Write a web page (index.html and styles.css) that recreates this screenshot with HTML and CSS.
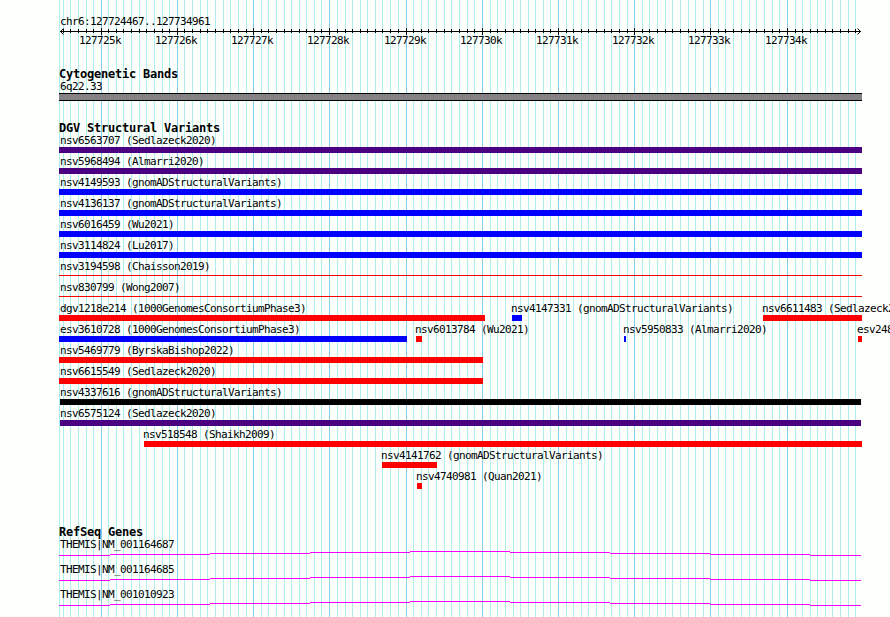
FILE: index.html
```
<!DOCTYPE html>
<html>
	<head>
		<meta charset="utf-8">
		<title>chr6:127724467..127734961</title>
		<link rel="stylesheet" href="styles.css">
	</head>
	<body>
		<div class="browser">
			<svg class="grid" width="890" height="617"></svg>
			<div class="region">chr6:127724467..127734961</div>
			<svg class="ruler" width="890" height="22"></svg>
			<div class="track cyto">
				<h2>Cytogenetic Bands</h2>
				<p>6q22.33</p>
				<div class="band"></div>
			</div>
			<div class="track variants">
				<h2>DGV Structural Variants</h2>
				<div class="rows"></div>
			</div>
			<div class="track genes">
				<h2>RefSeq Genes</h2>
				<div class="gene"><p>THEMIS|NM_001164687</p></div>
				<div class="gene"><p>THEMIS|NM_001164685</p></div>
				<div class="gene"><p>THEMIS|NM_001010923</p></div>
			</div>
		</div>
		<script src="tracks.js"></script>
	</body>
</html>
```
FILE: styles.css
```
* {
	margin: 0;
	padding: 0;
}

body {
	background: #fdfffc;
}

.browser {
	position: relative;
	width: 890px;
	height: 617px;
	overflow: hidden;
	font-family: "DejaVu Sans Mono", monospace;
	font-size: 11px;
	line-height: 13px;
	letter-spacing: -0.62px;
	color: #000;
	white-space: nowrap;
}

.grid {
	position: absolute;
	left: 0;
	top: 0;
	z-index: -1;
}

.grid .minor {
	fill: #afeeee;
}

.grid .major {
	fill: #87ceeb;
}

.region {
	padding: 15px 0 0 60px;
	height: 13px;
}

.ruler {
	display: block;
}

.track h2 {
	padding-left: 59px;
	height: 13px;
	font-size: 12px;
	line-height: 14px;
	letter-spacing: -0.22px;
}

.track p {
	padding-left: 60px;
}

.cyto {
	padding-top: 17px;
	height: 54px;
}

.band {
	width: 803px;
	height: 6px;
	margin-left: 59px;
	background: #858285;
	border-top: 1px solid #000;
	border-bottom: 1px solid #000;
}

/* 变异轨道 */
.variants {
	height: 404px;
}

.row {
	position: relative;
	height: 21px;
}

.row .name {
	position: absolute;
	top: 0;
}

.row .bar {
	position: absolute;
	top: 13px;
	height: 6px;
}

.row .thin {
	top: 15px;
	height: 1px;
}

.purple {
	background: #4b0082;
}

.blue {
	background: #0000ff;
}

.red {
	background: #ff0000;
}

.black {
	background: #000;
}

/* 基因轨道 */
.gene {
	height: 25px;
}

.gene svg {
	display: block;
	margin-top: -1px;
}
```
FILE: tracks.js
```
window.onload = function() {
	function my$(cls) {
		return document.getElementsByClassName(cls)[0];
	}

	// 每100bp一条网格线
	var ticks = [
		63, 70, 78, 86, 93, 101, 108, 116, 123, 131, 139, 146, 154, 162, 169, 177,
		184, 192, 200, 207, 215, 223, 230, 238, 246, 253, 261, 268, 276, 284, 291,
		299, 306, 314, 321, 329, 337, 345, 352, 360, 367, 375, 382, 390, 398, 406,
		413, 421, 428, 436, 444, 451, 459, 467, 474, 482, 490, 497, 505, 513, 520,
		528, 535, 543, 550, 558, 566, 573, 581, 588, 596, 604, 611, 619, 627, 634,
		642, 649, 657, 665, 672, 680, 688, 695, 703, 710, 718, 725, 733, 741, 749,
		756, 764, 772, 779, 787, 795, 802, 810, 817, 825, 832, 840, 848, 855
	];

	// 网格和标尺
	var grid = '<rect class="minor" x="59" y="0" width="1" height="617"/>';
	var ruler = '<rect x="60" y="3" width="801" height="1"/>' +
		'<path d="M63.5 0.5L60.5 3.5L63.5 6.5M857.5 0.5L860.5 3.5L857.5 6.5" fill="none" stroke="#000"/>';
	for (var i = 0; i < ticks.length; i++) {
		var x = ticks[i];
		var major = i % 10 == 5;
		grid += '<rect class="' + (major ? "major" : "minor") + '" x="' + x + '" y="0" width="1" height="617"/>';
		if (major) {
			ruler += '<rect x="' + x + '" y="0" width="1" height="7"/>';
			ruler += '<text x="' + (x - 22) + '" y="16">' + (127725 + (i - 5) / 10) + 'k</text>';
		} else {
			ruler += '<rect x="' + x + '" y="1" width="1" height="4"/>';
		}
	}
	my$("grid").innerHTML = grid;
	my$("ruler").innerHTML = ruler;

	// [名称, 文字x, 起点, 终点, 颜色]
	var rows = [
		[["nsv6563707 (Sedlazeck2020)", 60, 59, 862, "purple"]],
		[["nsv5968494 (Almarri2020)", 60, 59, 862, "purple"]],
		[["nsv4149593 (gnomADStructuralVariants)", 60, 59, 862, "blue"]],
		[["nsv4136137 (gnomADStructuralVariants)", 60, 59, 862, "blue"]],
		[["nsv6016459 (Wu2021)", 60, 59, 862, "blue"]],
		[["nsv3114824 (Lu2017)", 60, 59, 862, "blue"]],
		[["nsv3194598 (Chaisson2019)", 60, 59, 862, "red thin"]],
		[["nsv830799 (Wong2007)", 60, 59, 862, "red thin"]],
		[
			["dgv1218e214 (1000GenomesConsortiumPhase3)", 60, 59, 485, "red"],
			["nsv4147331 (gnomADStructuralVariants)", 511, 512, 522, "blue"],
			["nsv6611483 (Sedlazeck2020)", 762, 763, 862, "red"]
		],
		[
			["esv3610728 (1000GenomesConsortiumPhase3)", 60, 59, 407, "blue"],
			["nsv6013784 (Wu2021)", 415, 416, 422, "red"],
			["nsv5950833 (Almarri2020)", 623, 624, 626, "blue"],
			["esv248", 857, 858, 862, "red"]
		],
		[["nsv5469779 (ByrskaBishop2022)", 60, 59, 483, "red"]],
		[["nsv6615549 (Sedlazeck2020)", 60, 59, 483, "red"]],
		[["nsv4337616 (gnomADStructuralVariants)", 60, 60, 861, "black"]],
		[["nsv6575124 (Sedlazeck2020)", 60, 60, 861, "purple"]],
		[["nsv518548 (Shaikh2009)", 143, 144, 862, "red"]],
		[["nsv4141762 (gnomADStructuralVariants)", 381, 382, 437, "red"]],
		[["nsv4740981 (Quan2021)", 416, 417, 422, "red"]]
	];
	var html = "";
	for (var r = 0; r < rows.length; r++) {
		html += '<div class="row">';
		for (var j = 0; j < rows[r].length; j++) {
			var f = rows[r][j];
			html += '<span class="name" style="left:' + f[1] + 'px">' + f[0] + '</span>';
			html += '<div class="bar ' + f[4] + '" style="left:' + f[2] + 'px;width:' + (f[3] - f[2]) + 'px"></div>';
		}
		html += '</div>';
	}
	my$("rows").innerHTML = html;

	// 内含子连线, 每段100px
	var line = '<svg width="890" height="8"><path fill="none" stroke="#ff00ff" d="' +
		'M59 5.5H110M110 4.5H210M210 3.5H310M310 2.5H410M410 1.5H510' +
		'M510 2.5H610M610 3.5H710M710 4.5H810M810 5.5H861"/></svg>';
	var genes = document.getElementsByClassName("gene");
	for (var g = 0; g < genes.length; g++) {
		genes[g].innerHTML += line;
	}
}
```
